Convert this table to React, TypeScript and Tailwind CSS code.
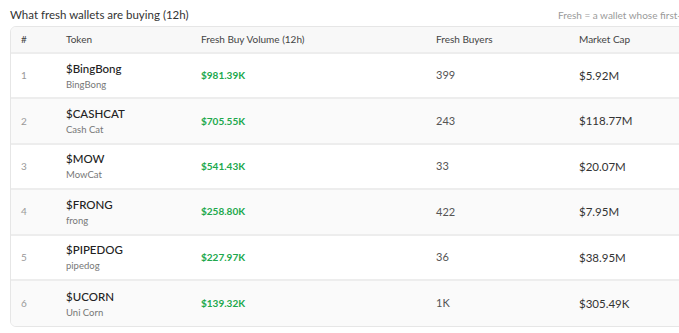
const rows = [
  { rank: 1, symbol: '$BingBong', name: 'BingBong', volume: '$981.39K', buyers: '399', mcap: '$5.92M' },
  { rank: 2, symbol: '$CASHCAT', name: 'Cash Cat', volume: '$705.55K', buyers: '243', mcap: '$118.77M' },
  { rank: 3, symbol: '$MOW', name: 'MowCat', volume: '$541.43K', buyers: '33', mcap: '$20.07M' },
  { rank: 4, symbol: '$FRONG', name: 'frong', volume: '$258.80K', buyers: '422', mcap: '$7.95M' },
  { rank: 5, symbol: '$PIPEDOG', name: 'pipedog', volume: '$227.97K', buyers: '36', mcap: '$38.95M' },
  { rank: 6, symbol: '$UCORN', name: 'Uni Corn', volume: '$139.32K', buyers: '1K', mcap: '$305.49K' },
];

const cols = 'grid grid-cols-[45px_135px_235px_143px_1fr]';

export default function App() {
  return (
    <div className="w-[679px] h-[333px] overflow-hidden bg-white font-['Lato',sans-serif]">
      <div className="w-[780px] pl-[10px]">
        <div className="flex items-end h-[26px] pb-[6px]">
          <h2 className="w-[548px] shrink-0 text-[11.5px] leading-none text-[#333]">What fresh wallets are buying (12h)</h2>
          <p className="whitespace-nowrap text-[10px] leading-none text-[#9a9a9a]">
            Fresh = a wallet whose first-ever buy
          </p>
        </div>

        <div className="rounded-md border border-[#e6e6e6] overflow-hidden">
          <div className={`${cols} h-[27px] items-center bg-[#f8f8f8] border-b-2 border-[#ededed] text-[10px] text-[#444]`}>
            <span className="pl-[10px]">#</span>
            <span className="pl-[10px]">Token</span>
            <span className="pl-[10px]">Fresh Buy Volume (12h)</span>
            <span className="pl-[10px]">Fresh Buyers</span>
            <span className="pl-[10px]">Market Cap</span>
          </div>
          {rows.map((r, i) => (
            <div
              key={r.rank}
              className={`${cols} h-[45.4px] items-center ${i < rows.length - 1 ? 'border-b-2 border-[#ededed]' : ''} ${i % 2 === 1 ? 'bg-[#fafafa]' : 'bg-white'}`}
            >
              <span className="pl-[10px] text-[10px] text-[#999]">{r.rank}</span>
              <div className="pl-[10px] pt-[1px] flex flex-col">
                <span className="text-[11.5px] leading-[16px] font-medium text-[#222]">{r.symbol}</span>
                <span className="text-[9.5px] leading-[15px] text-[#777]">{r.name}</span>
              </div>
              <span className="pl-[10px] text-[10px] font-bold text-[#20a84c]">{r.volume}</span>
              <span className="pl-[10px] text-[11px] text-[#555]">{r.buyers}</span>
              <span className="pl-[10px] text-[11.5px] text-[#333]">{r.mcap}</span>
            </div>
          ))}
        </div>
      </div>
    </div>
  );
}
